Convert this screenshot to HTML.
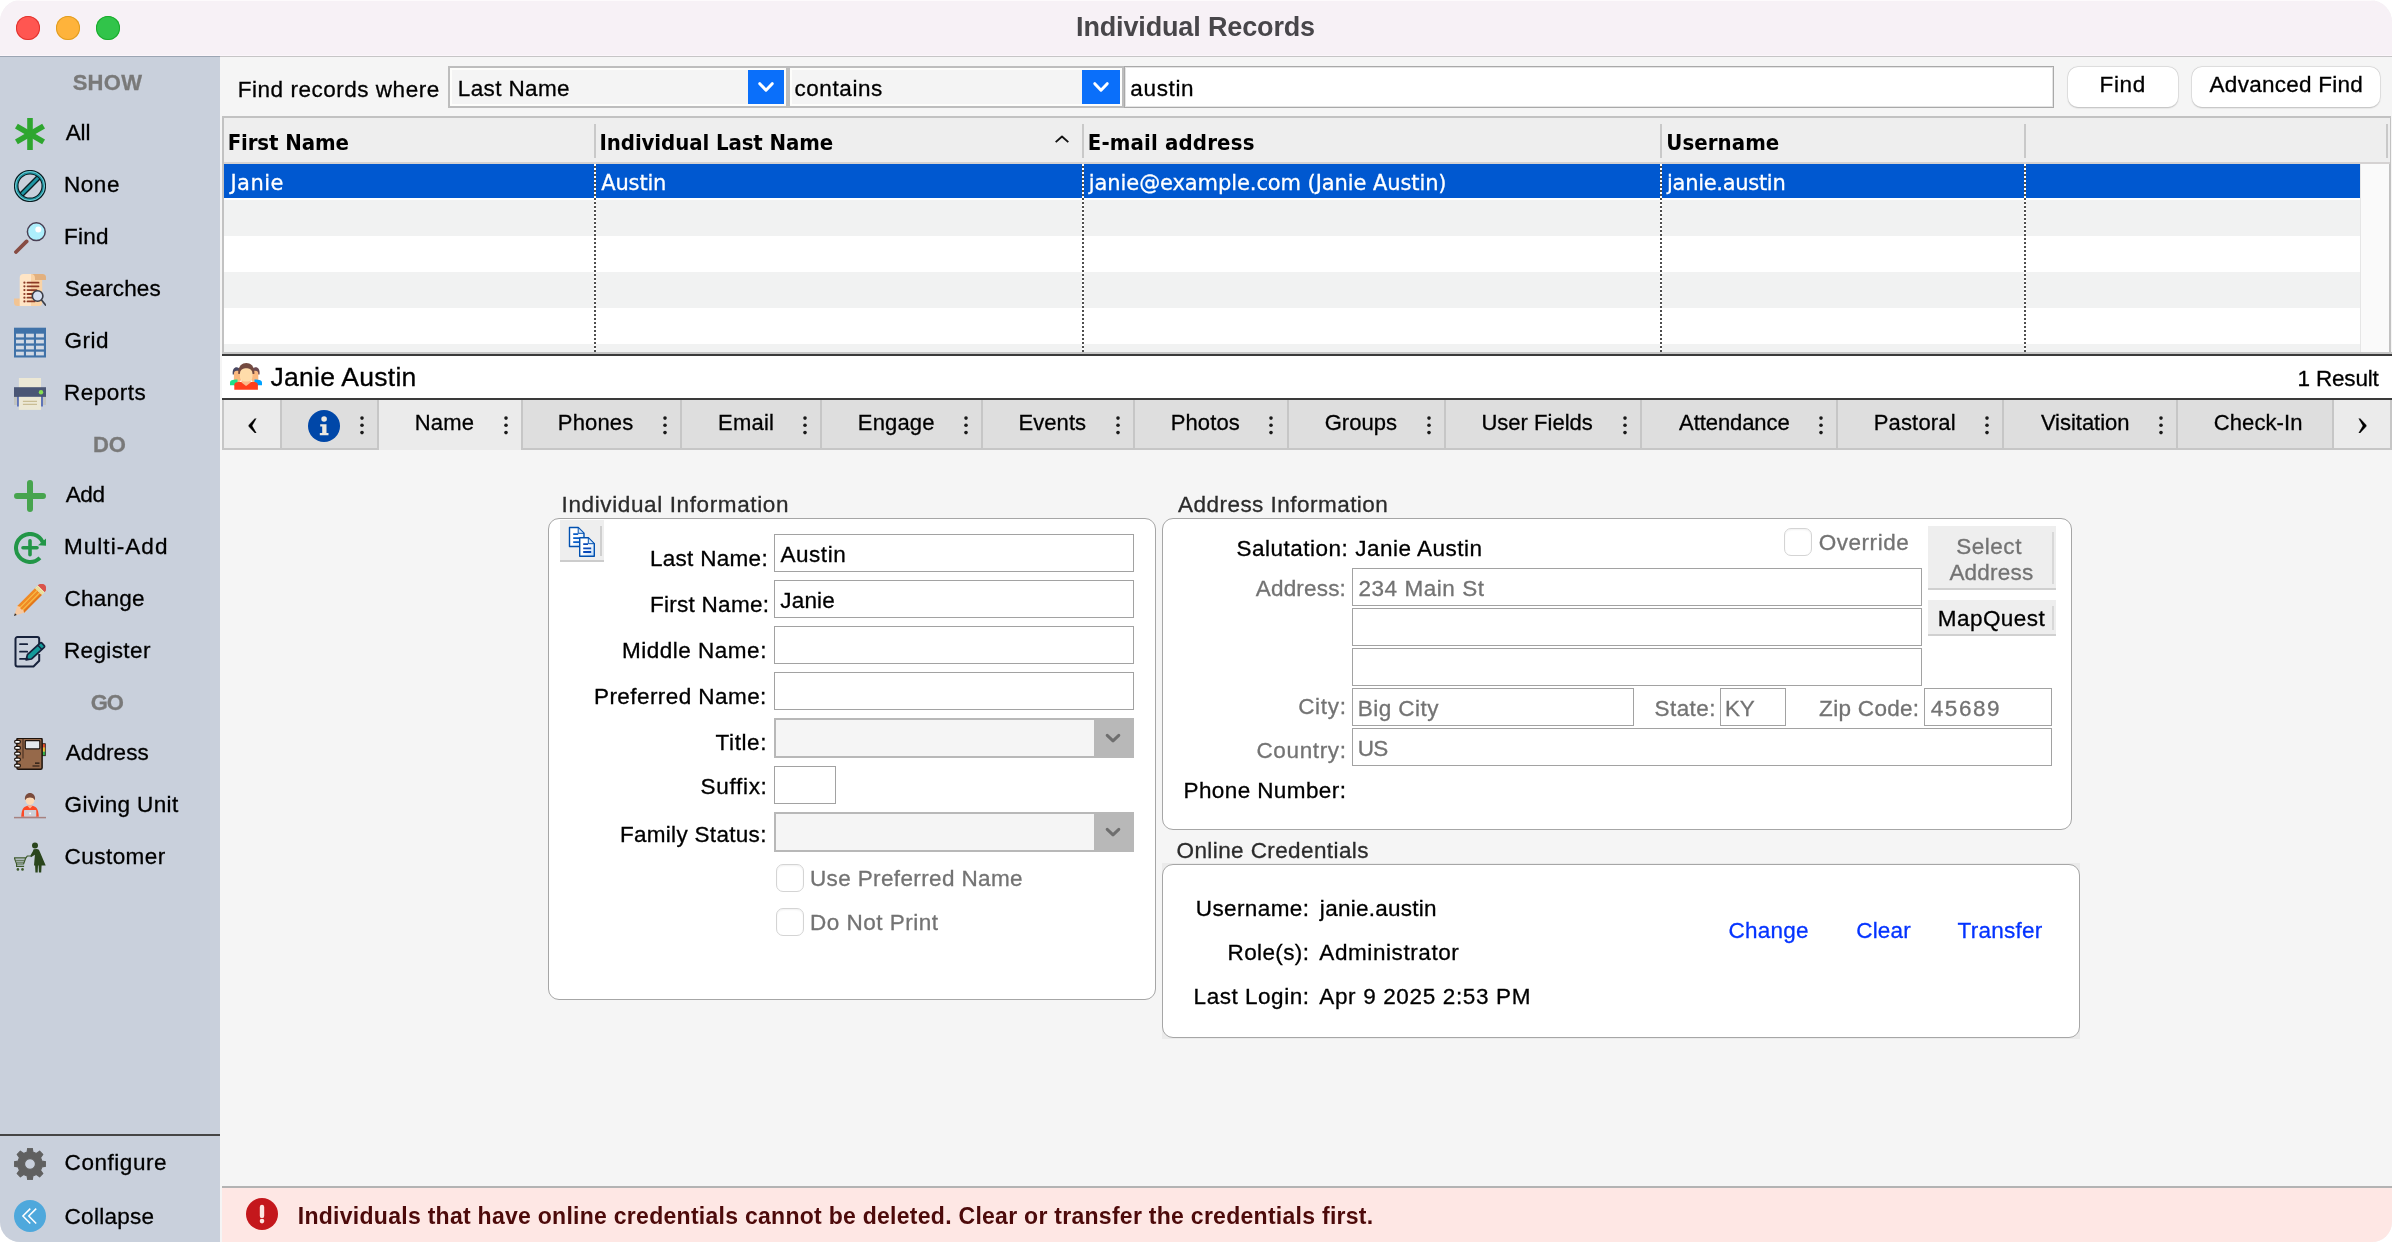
<!DOCTYPE html>
<html lang="en"><head><meta charset="utf-8"><title>Individual Records</title>
<style>
html,body{margin:0;padding:0;background:#fff;}
body{width:2392px;height:1242px;overflow:hidden;position:relative;}
#win{will-change:transform;position:absolute;left:0;top:0;width:2392px;height:1242px;overflow:hidden;border-radius:21px 22px 20px 20px;background:#f5f5f5;}
.t{position:absolute;white-space:pre;line-height:40px;}
.ls,.dv{-webkit-text-stroke:0.3px currentColor;}
.ls{font-family:'Liberation Sans',sans-serif;font-weight:400;}

.lser{font-family:'Liberation Serif',serif;font-weight:400;}
.lsb{font-family:'Liberation Sans',sans-serif;font-weight:700;}
.dv{font-family:'DejaVu Sans',sans-serif;font-weight:400;}
.dvb{font-family:'DejaVu Sans',sans-serif;font-weight:700;}
.dvc{font-family:'DejaVu Sans Condensed','DejaVu Sans',sans-serif;font-weight:400;}
.dvcb{font-family:'DejaVu Sans Condensed','DejaVu Sans',sans-serif;font-weight:700;}
.ic{position:absolute;width:32px;height:32px;}
.ic svg{display:block;}
</style></head>
<body>
<div id="win">
<header id="titlebar">
<div style="position:absolute;left:0px;top:0px;width:2392px;height:56px;background:#f7f1f6;"></div>
<div style="position:absolute;left:0px;top:55px;width:2392px;height:1px;background:#fcf6fb;"></div>
<div style="position:absolute;left:0px;top:0px;width:2392px;height:1px;background:#fdfafc;"></div>
<div style="position:absolute;left:0px;top:56px;width:220px;height:1px;background:#9ca5b3;"></div>
<div style="position:absolute;left:220px;top:56px;width:2172px;height:1px;background:#c6c5c6;"></div>
<div style="position:absolute;left:16px;top:16px;width:24px;height:24px;border-radius:50%;background:#ff5651;box-shadow:inset 0 0 0 1px #e0342f;"></div>
<div style="position:absolute;left:56px;top:16px;width:24px;height:24px;border-radius:50%;background:#feb33b;box-shadow:inset 0 0 0 1px #e09d20;"></div>
<div style="position:absolute;left:96px;top:16px;width:24px;height:24px;border-radius:50%;background:#31c44a;box-shadow:inset 0 0 0 1px #1aab2c;"></div>
<span class="t lsb" style="left:1076.04px;top:7px;font-size:27px;letter-spacing:-0.146px;color:#48464a;">Individual Records</span>
</header>
<nav id="sidebar">
<div style="position:absolute;left:0px;top:57px;width:220px;height:1185px;background:#c9d0dc;"></div>
<div style="position:absolute;left:0px;top:1134px;width:220px;height:2px;background:#454545;"></div>
<span class="t lsb" style="left:72.64px;top:63px;font-size:22px;letter-spacing:0.313px;color:#797979;-webkit-text-stroke:0.3px #797979;">SHOW</span>
<span class="t lsb" style="left:93.07px;top:425px;font-size:22px;letter-spacing:-0.080px;color:#797979;-webkit-text-stroke:0.3px #797979;">DO</span>
<span class="t lsb" style="left:90.82px;top:683px;font-size:22px;letter-spacing:-1.050px;color:#797979;-webkit-text-stroke:0.3px #797979;">GO</span>
<span class="t ls" style="left:65.70px;top:113px;font-size:22.5px;letter-spacing:-0.156px;">All</span>
<div class="ic" style="left:14px;top:118px"><svg width="32" height="32" viewBox="0 0 32 32"><g stroke="#2ea62f" stroke-width="5.600" stroke-linecap="butt"><path d="M16 0V32"/><path d="M2.400 8.100L29.600 23.900"/><path d="M2.400 23.900L29.600 8.100"/></g></svg></div>
<span class="t ls" style="left:63.90px;top:165px;font-size:22.5px;letter-spacing:0.579px;">None</span>
<div class="ic" style="left:14px;top:169.8px"><svg width="32" height="32" viewBox="0 0 32 32"><g fill="none"><path d="M6.800 25.200L25.200 6.800" stroke="#0b1c21" stroke-width="5.600"/><path d="M6.800 25.200L25.200 6.800" stroke="#1e96a4" stroke-width="3"/><circle cx="16" cy="16" r="13.800" stroke="#0b1c21" stroke-width="4.600"/><circle cx="16" cy="16" r="13.800" stroke="#1e96a4" stroke-width="2.400"/><circle cx="16" cy="16" r="14.500" stroke="#9fe3e6" stroke-width="0.700"/></g></svg></div>
<span class="t ls" style="left:63.90px;top:217px;font-size:22.5px;letter-spacing:0.300px;">Find</span>
<div class="ic" style="left:14px;top:222px"><svg width="32" height="32" viewBox="0 0 32 32"><path d="M13.500 18.500L10.800 21.200" stroke="#4a4055" stroke-width="1.800"/><path d="M12.600 19.400L2 30" stroke="#874c43" stroke-width="3.800" stroke-linecap="round"/><circle cx="22.300" cy="9.700" r="8.900" fill="#aeeffc" stroke="#4a4055" stroke-width="1.500"/><circle cx="24.300" cy="7.600" r="3" fill="#fff"/></svg></div>
<span class="t ls" style="left:64.69px;top:269px;font-size:22.5px;letter-spacing:0.148px;">Searches</span>
<div class="ic" style="left:14px;top:273.9px"><svg width="32" height="32" viewBox="0 0 32 32"><path d="M9 0h19.500a3.500 3.500 0 0 1 3.500 3.500v2.500H17z" fill="#e2b07e"/><path d="M0 24.500h6v7.500H3.500a3.500 3.500 0 0 1-3.500-3.500z" fill="#f2c493"/><path d="M9.500 0h7.500v32H5.700V4a4 4 0 0 1 3.800-4z" fill="#ffe5c6"/><path d="M17 0c3 0 4 2 4 4v2h7.200v22.500a3.500 3.500 0 0 1-3.500 3.500H17z" fill="#fad3a6"/><g stroke="#8b3a26" stroke-width="1.800" stroke-linecap="round"><path d="M13.500 8.700h11M13.500 12.300h11M13.500 16.100h9M13.500 20h6M13.500 23.700h5M13.500 27.400h7"/></g><g fill="#8b3a26"><circle cx="10.400" cy="8.700" r="1.100"/><circle cx="10.400" cy="12.300" r="1.100"/><circle cx="10.400" cy="16.100" r="1.100"/><circle cx="10.400" cy="20" r="1.100"/><circle cx="10.400" cy="23.700" r="1.100"/><circle cx="10.400" cy="27.400" r="1.100"/></g><path d="M27.500 26l4 5" stroke="#3a3d48" stroke-width="1.700" stroke-linecap="round"/><circle cx="23.600" cy="22" r="5.300" fill="#d5dff0" stroke="#3a3d48" stroke-width="1.600"/></svg></div>
<span class="t ls" style="left:64.58px;top:321px;font-size:22.5px;letter-spacing:0.487px;">Grid</span>
<div class="ic" style="left:14px;top:326.3px"><svg width="32" height="32" viewBox="0 0 32 32"><rect x="0" y="1.700" width="32" height="29.800" fill="#4072a8"/><g fill="#d2d9e4"><rect x="2" y="7.7" width="7.900" height="3.700"/><rect x="12" y="7.7" width="7.900" height="3.700"/><rect x="22" y="7.7" width="7.900" height="3.700"/><rect x="2" y="13.7" width="7.900" height="3.700"/><rect x="12" y="13.7" width="7.900" height="3.700"/><rect x="22" y="13.7" width="7.900" height="3.700"/><rect x="2" y="19.7" width="7.900" height="3.700"/><rect x="12" y="19.7" width="7.900" height="3.700"/><rect x="22" y="19.7" width="7.900" height="3.700"/><rect x="2" y="25.7" width="7.900" height="3.700"/><rect x="12" y="25.7" width="7.900" height="3.700"/><rect x="22" y="25.7" width="7.900" height="3.700"/></g></svg></div>
<span class="t ls" style="left:63.90px;top:373px;font-size:22.5px;letter-spacing:0.523px;">Reports</span>
<div class="ic" style="left:14px;top:378px"><svg width="32" height="32" viewBox="0 0 32 32"><rect x="4.900" y="0" width="22.100" height="10" fill="#ece8d5"/><rect x="0" y="18" width="3" height="9" fill="#c2c4c0"/><rect x="29" y="18" width="3" height="9" fill="#c2c4c0"/><rect x="3" y="18" width="2" height="10.500" fill="#5f74b8"/><rect x="27" y="18" width="2" height="10.500" fill="#5f74b8"/><rect x="0" y="9.200" width="32" height="9.700" fill="#4a5675"/><rect x="4.900" y="18.900" width="22.100" height="13" fill="#ece8d5"/><path d="M8.900 23.400h14.100M8.900 26.400h14.100" stroke="#c9bd94" stroke-width="1.100"/><circle cx="27" cy="14.300" r="2.200" fill="#86e052"/></svg></div>
<span class="t ls" style="left:65.70px;top:475px;font-size:22.5px;letter-spacing:-0.344px;">Add</span>
<div class="ic" style="left:14px;top:479.9px"><svg width="32" height="32" viewBox="0 0 32 32"><path d="M16 3V29M3 16H29" stroke="#47a44e" stroke-width="6" stroke-linecap="round"/></svg></div>
<span class="t ls" style="left:63.90px;top:527px;font-size:22.5px;letter-spacing:1.062px;">Multi-Add</span>
<div class="ic" style="left:14px;top:532px"><svg width="32" height="32" viewBox="0 0 32 32"><path d="M25.900 25.900A14 14 0 1 1 28.800 10.300" fill="none" stroke="#229647" stroke-width="4"/><path d="M32 6.400V13.800L24 13.300Z" fill="#229647"/><path d="M16 8.800V22.800M9 15.800H23" stroke="#229647" stroke-width="3.600" stroke-linecap="round"/></svg></div>
<span class="t ls" style="left:64.58px;top:579px;font-size:22.5px;letter-spacing:0.237px;">Change</span>
<div class="ic" style="left:14px;top:584px"><svg width="32" height="32" viewBox="0 0 32 32"><g transform="rotate(45 16 16)"><path d="M11.200 -0.300a4.800 4.800 0 0 1 9.600 0v0.600h-9.600z" fill="#d9534a"/><rect x="11.200" y="0.200" width="9.600" height="4" fill="#f3eeb8"/><path d="M11.200 1.600h9.600M11.200 3h9.600" stroke="#d8c77a" stroke-width="0.700"/><rect x="11.200" y="4.200" width="9.600" height="25" fill="#f08a24"/><rect x="13.800" y="4.200" width="1" height="25" fill="#f7c24e"/><rect x="17.200" y="4.200" width="1" height="25" fill="#f7c24e"/><rect x="19.200" y="4.200" width="1.600" height="25" fill="#e0761a"/><path d="M11.200 29.200l2.400-1.400 2.400 1.400 2.400-1.400 2.400 1.400-4.800 9.200z" fill="#f7c9a0"/><path d="M14.700 36l1.300 2.700 1.300-2.700z" fill="#2b2b2b"/></g></svg></div>
<span class="t ls" style="left:63.90px;top:631px;font-size:22.5px;letter-spacing:0.391px;">Register</span>
<div class="ic" style="left:14px;top:636.2px"><svg width="32" height="32" viewBox="0 0 32 32"><path d="M25.200 9V3a2 2 0 0 0-2-2H3.500a2 2 0 0 0-2 2v25.500a2 2 0 0 0 2 2h16l5.700-5.700V18" fill="none" stroke="#16213b" stroke-width="2" stroke-linejoin="round"/><path d="M6 8.200h7.200M6 15.700h7.200M6 22.900h6" stroke="#16213b" stroke-width="1.800" stroke-linecap="round"/><g transform="rotate(-42.500 21.800 15)"><path d="M8.600 15l4.500-2.900h17.400a1.200 1.200 0 0 1 1.200 1.200v3.400a1.200 1.200 0 0 1-1.200 1.200H13.100z" fill="#149a9a" stroke="#16213b" stroke-width="1.700" stroke-linejoin="round"/><path d="M27.300 12.100v5.800" stroke="#16213b" stroke-width="1.500"/><path d="M8.600 15l2.600-1.700v3.400z" fill="#16213b"/></g></svg></div>
<span class="t ls" style="left:65.70px;top:733px;font-size:22.5px;letter-spacing:0.085px;">Address</span>
<div class="ic" style="left:14px;top:738.2px"><svg width="32" height="32" viewBox="0 0 32 32"><rect x="28" y="5.700" width="3.300" height="4" fill="#e8502a"/><rect x="28" y="9.700" width="3.300" height="4" fill="#f2c230"/><rect x="28" y="13.700" width="3.300" height="4" fill="#35b34a"/><rect x="28" y="5.700" width="3.300" height="12" fill="none" stroke="#1d130d" stroke-width="0.800"/><rect x="2.900" y="0.200" width="25.200" height="31" rx="1.500" fill="#96694a" stroke="#1d130d" stroke-width="1.500"/><path d="M9 1v19.500" stroke="#4e3323" stroke-width="1.200"/><rect x="11.300" y="2.600" width="14.500" height="8.300" rx="0.800" fill="#e4e8ec" stroke="#1d130d" stroke-width="1.200"/><path d="M21 25.100h4.500M18.500 28h7" stroke="#1d130d" stroke-width="1.100"/><g fill="#fff" stroke="#1d130d" stroke-width="1.200"><rect x="0.600" y="2.3" width="5.800" height="3" rx="1.500"/><rect x="0.600" y="8.4" width="5.800" height="3" rx="1.500"/><rect x="0.600" y="14.2" width="5.800" height="3" rx="1.500"/><rect x="0.600" y="20.1" width="5.800" height="3" rx="1.500"/><rect x="0.600" y="26.2" width="5.800" height="3" rx="1.500"/></g></svg></div>
<span class="t ls" style="left:64.58px;top:785px;font-size:22.5px;letter-spacing:0.351px;">Giving Unit</span>
<div class="ic" style="left:14px;top:790.3px"><svg width="32" height="32" viewBox="0 0 32 32"><ellipse cx="16" cy="10" rx="4.400" ry="4.900" fill="#fdd9b5"/><path d="M11 9.800C9.800 0.800 22.200 0.800 21 9.800L20.300 9.800C19.600 6.600 12.400 6.600 11.700 9.800Z" fill="#7a4b3c"/><path d="M7.200 26.800c0.500-8.500 2.500-11 8.800-11s8.300 2.500 8.800 11z" fill="#fc4a26"/><path d="M13.300 15.700l2.700 2.700 2.700-2.700a8 8 0 0 0-5.400 0z" fill="#fdb493"/><rect x="10" y="20" width="12.300" height="6.800" rx="0.700" fill="#cdd0d8"/><rect x="15.300" y="22.600" width="1.700" height="1.700" fill="#fff"/><path d="M0 27.600h32" stroke="#a68280" stroke-width="1.500"/></svg></div>
<span class="t ls" style="left:64.58px;top:837px;font-size:22.5px;letter-spacing:0.448px;">Customer</span>
<div class="ic" style="left:14px;top:842.3px"><svg width="32" height="32" viewBox="0 0 32 32"><g fill="#2a451c"><circle cx="21" cy="3.400" r="3"/><path d="M19.800 7.200L22.900 7C24.200 7 25.100 7.800 25.600 9.200L31.700 23.500L27.600 23.500L27.200 30.600L24.900 30.600L24.600 23.500L24 23.500L23.700 30.600L21.400 30.600L21.100 23.500L20 23.500L20.900 12.800L17 15.300L16.100 14L19 9C19.200 8 19.400 7.400 19.800 7.200Z"/></g><g fill="none" stroke="#3e5a2c" stroke-width="1.200"><path d="M0.300 15.800h11.500l-2.200 6.200h-7z"/><path d="M2.100 18.300h8.600M2.700 20.200h7.400" stroke-width="0.900"/><path d="M11.800 15.800l1.500-1.800h3.200"/><path d="M2.600 22v2.300h7.500"/></g><circle cx="3.900" cy="27.400" r="1.300" fill="#3e5a2c"/><circle cx="8.500" cy="27.400" r="1.300" fill="#3e5a2c"/></svg></div>
<span class="t ls" style="left:64.58px;top:1143px;font-size:22.5px;letter-spacing:0.550px;">Configure</span>
<div class="ic" style="left:14px;top:1148px"><svg width="32" height="32" viewBox="0 0 32 32"><path d="M13.14 4.04L13.77 0.16L18.23 0.16L18.86 4.04L22.43 5.52L25.62 3.22L28.78 6.38L26.48 9.57L27.96 13.14L31.84 13.77L31.84 18.23L27.96 18.86L26.48 22.43L28.78 25.62L25.62 28.78L22.43 26.48L18.86 27.96L18.23 31.84L13.77 31.84L13.14 27.96L9.57 26.48L6.38 28.78L3.22 25.62L5.52 22.43L4.04 18.86L0.16 18.23L0.16 13.77L4.04 13.14L5.52 9.57L3.22 6.38L6.38 3.22L9.57 5.52Z M16 10.600a5.400 5.400 0 1 0 0.010 0z" fill="#606060" fill-rule="evenodd" stroke="#606060" stroke-width="1.200" stroke-linejoin="round"/></svg></div>
<span class="t ls" style="left:64.58px;top:1197px;font-size:22.5px;letter-spacing:0.273px;">Collapse</span>
<div class="ic" style="left:14px;top:1199.8px"><svg width="32" height="32" viewBox="0 0 32 32"><circle cx="16" cy="16" r="16" fill="#4ea8dc"/><path d="M16.300 8.600L8.900 16L16.300 23.600M22.200 8.600L14.800 16L22.200 23.600" fill="none" stroke="#fff" stroke-width="1.500"/></svg></div>
</nav>
<section id="find-toolbar">
<span class="t ls" style="left:237.80px;top:70px;font-size:22.5px;letter-spacing:0.518px;">Find records where</span>
<div style="position:absolute;left:448px;top:66px;width:340px;height:42px;box-sizing:border-box;border:2px solid #bdbdbd;background:#f4f4f4;box-shadow:inset 0 0 0 2px #fdfdfb;"></div>
<div style="position:absolute;left:748px;top:70px;width:36px;height:34px;background:#0a6ffa;"><svg width="36" height="34" viewBox="0 0 36 34"><path d="M11.8 13.700 L18.0 20.200 L24.2 13.700" fill="none" stroke="#fff" stroke-width="3" stroke-linecap="round" stroke-linejoin="round"/></svg></div>
<span class="t ls" style="left:457.80px;top:69px;font-size:22.5px;letter-spacing:0.378px;">Last Name</span>
<div style="position:absolute;left:788px;top:66px;width:336px;height:42px;box-sizing:border-box;border:2px solid #bdbdbd;background:#f4f4f4;box-shadow:inset 0 0 0 2px #fdfdfb;"></div>
<div style="position:absolute;left:1082px;top:70px;width:38px;height:34px;background:#0a6ffa;"><svg width="38" height="34" viewBox="0 0 38 34"><path d="M12.8 13.700 L19.0 20.200 L25.2 13.700" fill="none" stroke="#fff" stroke-width="3" stroke-linecap="round" stroke-linejoin="round"/></svg></div>
<span class="t ls" style="left:794.40px;top:69px;font-size:22.5px;letter-spacing:0.596px;">contains</span>
<div style="position:absolute;left:1124px;top:66px;width:930px;height:42px;box-sizing:border-box;border:1px solid #a9a9a9;background:#fff;box-shadow:inset 0 0 0 1px #e4e4e4;"></div>
<span class="t ls" style="left:1130.30px;top:69px;font-size:22.5px;letter-spacing:0.660px;">austin</span>
<div style="position:absolute;left:2068px;top:67px;width:110px;height:40px;border-radius:10px;background:#fff;box-shadow:0 0 0 0.5px #d2d2d2,0 0.5px 1.5px rgba(0,0,0,.28);"></div>
<span class="t ls" style="left:2099.60px;top:65px;font-size:22.5px;letter-spacing:0.600px;">Find</span>
<div style="position:absolute;left:2192px;top:67px;width:188px;height:40px;border-radius:10px;background:#fff;box-shadow:0 0 0 0.5px #d2d2d2,0 0.5px 1.5px rgba(0,0,0,.28);"></div>
<span class="t ls" style="left:2209.60px;top:65px;font-size:22.5px;letter-spacing:0.257px;">Advanced Find</span>
</section>
<section id="results-table">
<div style="position:absolute;left:222px;top:116px;width:2169px;height:238px;box-sizing:border-box;border:2px solid #c2c2c2;border-bottom:none;background:#fff;"></div>
<div style="position:absolute;left:224px;top:118px;width:2166px;height:44px;background:#eeeeee;"></div>
<div style="position:absolute;left:224px;top:162px;width:2166px;height:2px;background:#d5d2d2;"></div>
<div style="position:absolute;left:224px;top:164px;width:2136px;height:34px;background:#0058d0;"></div>
<div style="position:absolute;left:224px;top:200px;width:2136px;height:36px;background:#f1f2f2;"></div>
<div style="position:absolute;left:224px;top:272px;width:2136px;height:36px;background:#f1f2f2;"></div>
<div style="position:absolute;left:224px;top:344px;width:2136px;height:8px;background:#f1f2f2;"></div>
<div style="position:absolute;left:2360px;top:164px;width:28px;height:188px;background:#fafafa;border-left:1px solid #e6e6e6;"></div>
<div style="position:absolute;left:222px;top:352px;width:2170px;height:2px;background:#c6c6c6;"></div>
<div style="position:absolute;left:222px;top:354px;width:2170px;height:2px;background:#3a3a3a;"></div>
<div style="position:absolute;left:594px;top:124px;width:2px;height:34px;background:#c9c9c9;"></div>
<div style="position:absolute;left:594px;top:164px;width:2px;height:188px;background:repeating-linear-gradient(to bottom,#fff 0,#fff 2px,#4e4e4e 2px,#4e4e4e 4px);"></div>
<div style="position:absolute;left:1082px;top:124px;width:2px;height:34px;background:#c9c9c9;"></div>
<div style="position:absolute;left:1082px;top:164px;width:2px;height:188px;background:repeating-linear-gradient(to bottom,#fff 0,#fff 2px,#4e4e4e 2px,#4e4e4e 4px);"></div>
<div style="position:absolute;left:1660px;top:124px;width:2px;height:34px;background:#c9c9c9;"></div>
<div style="position:absolute;left:1660px;top:164px;width:2px;height:188px;background:repeating-linear-gradient(to bottom,#fff 0,#fff 2px,#4e4e4e 2px,#4e4e4e 4px);"></div>
<div style="position:absolute;left:2024px;top:124px;width:2px;height:34px;background:#c9c9c9;"></div>
<div style="position:absolute;left:2024px;top:164px;width:2px;height:188px;background:repeating-linear-gradient(to bottom,#fff 0,#fff 2px,#4e4e4e 2px,#4e4e4e 4px);"></div>
<div style="position:absolute;left:2386px;top:124px;width:2px;height:34px;background:#c9c9c9;"></div>
<svg style="position:absolute;left:1053px;top:133px" width="18" height="12" viewBox="0 0 18 12"><path d="M2.700 9.100 L9 3.500 L15.300 9.100" fill="none" stroke="#111" stroke-width="1.900" stroke-linejoin="round"/></svg>
<span class="t dvcb" style="left:227.64px;top:123px;font-size:22px;letter-spacing:-0.107px;">First Name</span>
<span class="t dvcb" style="left:599.54px;top:123px;font-size:22px;letter-spacing:-0.092px;">Individual Last Name</span>
<span class="t dvcb" style="left:1087.74px;top:123px;font-size:22px;letter-spacing:0.160px;">E-mail address</span>
<span class="t dvcb" style="left:1666.34px;top:123px;font-size:22px;letter-spacing:0.060px;">Username</span>
<span class="t dv" style="left:230.45px;top:163px;font-size:21px;letter-spacing:0.441px;color:#fff;">Janie</span>
<span class="t dv" style="left:601.29px;top:163px;font-size:21px;letter-spacing:-0.170px;color:#fff;">Austin</span>
<span class="t dv" style="left:1088.82px;top:163px;font-size:21px;letter-spacing:-0.090px;color:#fff;">janie@example.com (Janie Austin)</span>
<span class="t dv" style="left:1667.02px;top:163px;font-size:21px;letter-spacing:-0.295px;color:#fff;">janie.austin</span>
</section>
<section id="record-title">
<div style="position:absolute;left:222px;top:356px;width:2170px;height:42px;background:#fff;"></div>
<div style="position:absolute;left:222px;top:398px;width:2170px;height:2px;background:#3a3a3a;"></div>
<div class="ic" style="left:230px;top:362.500px"><svg width="32" height="27" viewBox="0 0 32 27"><path d="M2.700 11.500c-1-9 6-8.500 7.500-5v5z" fill="#4a4862"/><path d="M29.500 11.500c1-9-6-8.500-7.500-5v5z" fill="#6a4a52"/><rect x="3.900" y="7.800" width="7" height="11.500" rx="3" fill="#fbb97f"/><rect x="21.300" y="7.800" width="7" height="11.500" rx="3" fill="#fbb97f"/><path d="M0 22.300v-2.500c0-2.300 2-3.300 7.500-3.300v5.800z" fill="#1fe08a"/><path d="M32 22.300v-2.500c0-2.300-2-3.300-7.500-3.300v5.800z" fill="#00a2ff"/><path d="M4.300 26.800v-4.500c0-2.200 1.500-3.200 4-3.200h15.600c2.500 0 4 1 4 3.200v4.500z" fill="#ff3d1c"/><path d="M11.500 17h9.200v2.400l-4.600 3.600-4.600-3.600z" fill="#fbb98a"/><path d="M8.300 11c-1.500-14.600 17.500-14.600 16 0z" fill="#744a40"/><rect x="9.900" y="5.300" width="12.600" height="13.300" rx="5.200" fill="#ffdcaa"/></svg></div>
<span class="t ls" style="left:270.60px;top:357px;font-size:26.5px;letter-spacing:0.253px;">Janie Austin</span>
<span class="t ls" style="left:2297.51px;top:359px;font-size:22.5px;letter-spacing:-0.180px;">1 Result</span>
</section>
<section id="tab-bar">
<div style="position:absolute;left:222px;top:400px;width:2170px;height:50px;background:#dedede;box-shadow:inset 0 -2px 0 #c6c6c6;"></div>
<div style="position:absolute;left:222px;top:400px;width:58px;height:48px;background:#ebebeb;"></div>
<div style="position:absolute;left:2334px;top:400px;width:56px;height:48px;background:#ebebeb;"></div>
<div style="position:absolute;left:379px;top:400px;width:142px;height:50px;background:#ebebeb;"></div>
<div style="position:absolute;left:222px;top:400px;width:2px;height:50px;background:#c6c6c6;"></div>
<div style="position:absolute;left:280px;top:400px;width:2px;height:48px;background:#c6c6c6;"></div>
<div style="position:absolute;left:377px;top:400px;width:2px;height:50px;background:#c6c6c6;"></div>
<div style="position:absolute;left:521px;top:400px;width:2px;height:48px;background:#c6c6c6;"></div>
<div style="position:absolute;left:680px;top:400px;width:2px;height:48px;background:#c6c6c6;"></div>
<div style="position:absolute;left:820px;top:400px;width:2px;height:48px;background:#c6c6c6;"></div>
<div style="position:absolute;left:981px;top:400px;width:2px;height:48px;background:#c6c6c6;"></div>
<div style="position:absolute;left:1133px;top:400px;width:2px;height:48px;background:#c6c6c6;"></div>
<div style="position:absolute;left:1287px;top:400px;width:2px;height:48px;background:#c6c6c6;"></div>
<div style="position:absolute;left:1444px;top:400px;width:2px;height:48px;background:#c6c6c6;"></div>
<div style="position:absolute;left:1640px;top:400px;width:2px;height:48px;background:#c6c6c6;"></div>
<div style="position:absolute;left:1836px;top:400px;width:2px;height:48px;background:#c6c6c6;"></div>
<div style="position:absolute;left:2002px;top:400px;width:2px;height:48px;background:#c6c6c6;"></div>
<div style="position:absolute;left:2176px;top:400px;width:2px;height:48px;background:#c6c6c6;"></div>
<div style="position:absolute;left:2332px;top:400px;width:2px;height:48px;background:#c6c6c6;"></div>
<div style="position:absolute;left:2390px;top:400px;width:2px;height:48px;background:#c6c6c6;"></div>
<span class="t lser" style="left:246.16px;top:402px;font-size:37.5px;-webkit-text-stroke:0.2px #000;">‹</span>
<span class="t lser" style="left:2356.36px;top:402px;font-size:37.5px;-webkit-text-stroke:0.2px #000;">›</span>
<div class="ic" style="left:308px;top:410px"><svg width="32" height="32" viewBox="0 0 32 32"><circle cx="16" cy="16" r="16" fill="#0047a8"/><circle cx="16.100" cy="9" r="2.800" fill="#ece8e0"/><path d="M12.200 14.200h6.300v8.700h2v2.400h-8.700v-2.400h2.400v-6.300h-2z" fill="#ece8e0"/></svg></div>
<svg style="position:absolute;left:358.8px;top:414px" width="6" height="24" viewBox="0 0 6 24"><circle cx="3" cy="4.100" r="1.800" fill="#1a1a1a"/><circle cx="3" cy="11.300" r="1.800" fill="#1a1a1a"/><circle cx="3" cy="18.600" r="1.800" fill="#1a1a1a"/></svg>
<span class="t ls" style="left:414.74px;top:403px;font-size:22px;letter-spacing:0.207px;">Name</span>
<svg style="position:absolute;left:502.6px;top:414px" width="6" height="24" viewBox="0 0 6 24"><circle cx="3" cy="4.100" r="1.800" fill="#1a1a1a"/><circle cx="3" cy="11.300" r="1.800" fill="#1a1a1a"/><circle cx="3" cy="18.600" r="1.800" fill="#1a1a1a"/></svg>
<span class="t ls" style="left:557.84px;top:403px;font-size:22px;letter-spacing:0.150px;">Phones</span>
<svg style="position:absolute;left:661.8px;top:414px" width="6" height="24" viewBox="0 0 6 24"><circle cx="3" cy="4.100" r="1.800" fill="#1a1a1a"/><circle cx="3" cy="11.300" r="1.800" fill="#1a1a1a"/><circle cx="3" cy="18.600" r="1.800" fill="#1a1a1a"/></svg>
<span class="t ls" style="left:718.04px;top:403px;font-size:22px;letter-spacing:0.223px;">Email</span>
<svg style="position:absolute;left:801.6px;top:414px" width="6" height="24" viewBox="0 0 6 24"><circle cx="3" cy="4.100" r="1.800" fill="#1a1a1a"/><circle cx="3" cy="11.300" r="1.800" fill="#1a1a1a"/><circle cx="3" cy="18.600" r="1.800" fill="#1a1a1a"/></svg>
<span class="t ls" style="left:857.84px;top:403px;font-size:22px;letter-spacing:0.152px;">Engage</span>
<svg style="position:absolute;left:962.8px;top:414px" width="6" height="24" viewBox="0 0 6 24"><circle cx="3" cy="4.100" r="1.800" fill="#1a1a1a"/><circle cx="3" cy="11.300" r="1.800" fill="#1a1a1a"/><circle cx="3" cy="18.600" r="1.800" fill="#1a1a1a"/></svg>
<span class="t ls" style="left:1018.44px;top:403px;font-size:22px;letter-spacing:0.084px;">Events</span>
<svg style="position:absolute;left:1114.7px;top:414px" width="6" height="24" viewBox="0 0 6 24"><circle cx="3" cy="4.100" r="1.800" fill="#1a1a1a"/><circle cx="3" cy="11.300" r="1.800" fill="#1a1a1a"/><circle cx="3" cy="18.600" r="1.800" fill="#1a1a1a"/></svg>
<span class="t ls" style="left:1170.64px;top:403px;font-size:22px;letter-spacing:0.140px;">Photos</span>
<svg style="position:absolute;left:1267.9px;top:414px" width="6" height="24" viewBox="0 0 6 24"><circle cx="3" cy="4.100" r="1.800" fill="#1a1a1a"/><circle cx="3" cy="11.300" r="1.800" fill="#1a1a1a"/><circle cx="3" cy="18.600" r="1.800" fill="#1a1a1a"/></svg>
<span class="t ls" style="left:1324.70px;top:403px;font-size:22px;letter-spacing:0.042px;">Groups</span>
<svg style="position:absolute;left:1425.8px;top:414px" width="6" height="24" viewBox="0 0 6 24"><circle cx="3" cy="4.100" r="1.800" fill="#1a1a1a"/><circle cx="3" cy="11.300" r="1.800" fill="#1a1a1a"/><circle cx="3" cy="18.600" r="1.800" fill="#1a1a1a"/></svg>
<span class="t ls" style="left:1481.45px;top:403px;font-size:22px;letter-spacing:0.011px;">User Fields</span>
<svg style="position:absolute;left:1621.7px;top:414px" width="6" height="24" viewBox="0 0 6 24"><circle cx="3" cy="4.100" r="1.800" fill="#1a1a1a"/><circle cx="3" cy="11.300" r="1.800" fill="#1a1a1a"/><circle cx="3" cy="18.600" r="1.800" fill="#1a1a1a"/></svg>
<span class="t ls" style="left:1679.10px;top:403px;font-size:22px;letter-spacing:-0.081px;">Attendance</span>
<svg style="position:absolute;left:1818.1px;top:414px" width="6" height="24" viewBox="0 0 6 24"><circle cx="3" cy="4.100" r="1.800" fill="#1a1a1a"/><circle cx="3" cy="11.300" r="1.800" fill="#1a1a1a"/><circle cx="3" cy="18.600" r="1.800" fill="#1a1a1a"/></svg>
<span class="t ls" style="left:1873.64px;top:403px;font-size:22px;letter-spacing:0.194px;">Pastoral</span>
<svg style="position:absolute;left:1983.6px;top:414px" width="6" height="24" viewBox="0 0 6 24"><circle cx="3" cy="4.100" r="1.800" fill="#1a1a1a"/><circle cx="3" cy="11.300" r="1.800" fill="#1a1a1a"/><circle cx="3" cy="18.600" r="1.800" fill="#1a1a1a"/></svg>
<span class="t ls" style="left:2040.89px;top:403px;font-size:22px;letter-spacing:-0.027px;">Visitation</span>
<svg style="position:absolute;left:2157.6px;top:414px" width="6" height="24" viewBox="0 0 6 24"><circle cx="3" cy="4.100" r="1.800" fill="#1a1a1a"/><circle cx="3" cy="11.300" r="1.800" fill="#1a1a1a"/><circle cx="3" cy="18.600" r="1.800" fill="#1a1a1a"/></svg>
<span class="t ls" style="left:2213.80px;top:403px;font-size:22px;letter-spacing:0.090px;">Check-In</span>
</section>
<section id="individual-information">
<span class="t ls" style="left:561.57px;top:485px;font-size:22.5px;letter-spacing:0.620px;color:#2b2b2b;">Individual Information</span>
<div style="position:absolute;left:548px;top:518px;width:608px;height:482px;box-sizing:border-box;border:1px solid #a6a6a6;border-radius:11px;background:#fff;"></div>
<div style="position:absolute;left:560px;top:520px;width:44px;height:40px;background:#eeeeee;box-shadow:0 2px 0 #cccccc;"></div>
<div style="position:absolute;left:600px;top:526px;width:2px;height:30px;background:#cfcfcf;"></div>
<div class="ic" style="left:568px;top:526px"><svg width="28" height="31" viewBox="0 0 28 31"><defs><linearGradient id="cg" x1="0" y1="0" x2="1" y2="1"><stop offset="0.500" stop-color="#fff"/><stop offset="1" stop-color="#b9d8f7"/></linearGradient></defs><path d="M1.500 1.500h8.700l5.800 5.800v13.200H1.500z" fill="url(#cg)" stroke="#0050b0" stroke-width="1.400" stroke-linejoin="round"/><path d="M10.200 1.500v5.800h5.800z" fill="#d9e9fb" stroke="#0050b0" stroke-width="1" stroke-linejoin="round"/><path d="M5.200 8.200h5M5.200 12.200h6M5.200 16.100h6" stroke="#0a5ec8" stroke-width="1.700"/><path d="M11.700 11.700h8.600l6 6v12.500H11.700z" fill="url(#cg)" stroke="#0050b0" stroke-width="1.400" stroke-linejoin="round"/><path d="M20.300 11.700v6h6z" fill="#d9e9fb" stroke="#0050b0" stroke-width="1" stroke-linejoin="round"/><path d="M15.200 18.200h4.800M15.200 22.300h8M15.200 26h8" stroke="#0a4ab8" stroke-width="1.800"/></svg></div>
<div style="position:absolute;left:774px;top:534px;width:360px;height:38px;box-sizing:border-box;border:1px solid #a2a2a2;background:#fff;"></div>
<div style="position:absolute;left:774px;top:580px;width:360px;height:38px;box-sizing:border-box;border:1px solid #a2a2a2;background:#fff;"></div>
<div style="position:absolute;left:774px;top:626px;width:360px;height:38px;box-sizing:border-box;border:1px solid #a2a2a2;background:#fff;"></div>
<div style="position:absolute;left:774px;top:672px;width:360px;height:38px;box-sizing:border-box;border:1px solid #a2a2a2;background:#fff;"></div>
<div style="position:absolute;left:774px;top:766px;width:62px;height:38px;box-sizing:border-box;border:1px solid #a2a2a2;background:#fff;"></div>
<div style="position:absolute;left:774px;top:718px;width:360px;height:40px;box-sizing:border-box;border:2px solid #b8b8b8;background:#f5f5f5;"></div>
<div style="position:absolute;left:1094px;top:718px;width:40px;height:40px;background:#b8b8b8;"><svg width="40" height="40" viewBox="0 0 40 40"><path d="M13.200 17.400 L19 22.900 L24.800 17.400" fill="none" stroke="#6e6e6e" stroke-width="3" stroke-linecap="round" stroke-linejoin="round"/></svg></div>
<div style="position:absolute;left:774px;top:812px;width:360px;height:40px;box-sizing:border-box;border:2px solid #b8b8b8;background:#f5f5f5;"></div>
<div style="position:absolute;left:1094px;top:812px;width:40px;height:40px;background:#b8b8b8;"><svg width="40" height="40" viewBox="0 0 40 40"><path d="M13.200 17.400 L19 22.900 L24.800 17.400" fill="none" stroke="#6e6e6e" stroke-width="3" stroke-linecap="round" stroke-linejoin="round"/></svg></div>
<span class="t ls" style="left:649.90px;top:539px;font-size:22.5px;letter-spacing:0.306px;">Last Name:</span>
<span class="t ls" style="left:649.90px;top:585px;font-size:22.5px;letter-spacing:0.281px;">First Name:</span>
<span class="t ls" style="left:621.90px;top:631px;font-size:22.5px;letter-spacing:0.519px;">Middle Name:</span>
<span class="t ls" style="left:594.00px;top:677px;font-size:22.5px;letter-spacing:0.432px;">Preferred Name:</span>
<span class="t ls" style="left:715.55px;top:723px;font-size:22.5px;letter-spacing:0.592px;">Title:</span>
<span class="t ls" style="left:700.49px;top:767px;font-size:22.5px;letter-spacing:0.706px;">Suffix:</span>
<span class="t ls" style="left:619.90px;top:815px;font-size:22.5px;letter-spacing:0.308px;">Family Status:</span>
<span class="t ls" style="left:780.60px;top:535px;font-size:22.5px;letter-spacing:0.503px;">Austin</span>
<span class="t ls" style="left:780.26px;top:581px;font-size:22.5px;letter-spacing:0.194px;">Janie</span>
<div style="position:absolute;left:776px;top:864px;width:28px;height:28px;box-sizing:border-box;border:1px solid #d4d4d4;border-radius:7px;background:#fff;box-shadow:inset 0 1px 2px rgba(0,0,0,.06);"></div>
<div style="position:absolute;left:776px;top:908px;width:28px;height:28px;box-sizing:border-box;border:1px solid #d4d4d4;border-radius:7px;background:#fff;box-shadow:inset 0 1px 2px rgba(0,0,0,.06);"></div>
<span class="t ls" style="left:810.01px;top:859px;font-size:22.5px;letter-spacing:0.369px;color:#737373;">Use Preferred Name</span>
<span class="t ls" style="left:809.90px;top:903px;font-size:22.5px;letter-spacing:0.509px;color:#737373;">Do Not Print</span>
</section>
<section id="address-information">
<span class="t ls" style="left:1178.00px;top:485px;font-size:22.5px;letter-spacing:0.472px;color:#2b2b2b;">Address Information</span>
<div style="position:absolute;left:1162px;top:518px;width:910px;height:312px;box-sizing:border-box;border:1px solid #a6a6a6;border-radius:11px;background:#fff;"></div>
<div style="position:absolute;left:1352px;top:568px;width:570px;height:38px;box-sizing:border-box;border:1px solid #a2a2a2;background:#fff;"></div>
<div style="position:absolute;left:1352px;top:608px;width:570px;height:38px;box-sizing:border-box;border:1px solid #a2a2a2;background:#fff;"></div>
<div style="position:absolute;left:1352px;top:648px;width:570px;height:38px;box-sizing:border-box;border:1px solid #a2a2a2;background:#fff;"></div>
<div style="position:absolute;left:1352px;top:688px;width:282px;height:38px;box-sizing:border-box;border:1px solid #a2a2a2;background:#fff;"></div>
<div style="position:absolute;left:1720px;top:688px;width:66px;height:38px;box-sizing:border-box;border:1px solid #a2a2a2;background:#fff;"></div>
<div style="position:absolute;left:1924px;top:688px;width:128px;height:38px;box-sizing:border-box;border:1px solid #a2a2a2;background:#fff;"></div>
<div style="position:absolute;left:1352px;top:728px;width:700px;height:38px;box-sizing:border-box;border:1px solid #a2a2a2;background:#fff;"></div>
<span class="t ls" style="left:1236.59px;top:529px;font-size:22.5px;letter-spacing:0.493px;">Salutation:</span>
<span class="t ls" style="left:1355.26px;top:529px;font-size:22.5px;letter-spacing:0.493px;">Janie Austin</span>
<span class="t ls" style="left:1255.80px;top:569px;font-size:22.5px;letter-spacing:0.180px;color:#737373;">Address:</span>
<span class="t ls" style="left:1358.38px;top:569px;font-size:22.5px;letter-spacing:0.560px;color:#737373;">234 Main St</span>
<span class="t ls" style="left:1298.17px;top:687px;font-size:22.5px;letter-spacing:0.691px;color:#737373;">City:</span>
<span class="t ls" style="left:1357.70px;top:689px;font-size:22.5px;letter-spacing:0.470px;color:#737373;">Big City</span>
<span class="t ls" style="left:1654.49px;top:689px;font-size:22.5px;letter-spacing:0.442px;color:#737373;">State:</span>
<span class="t ls" style="left:1725.00px;top:689px;font-size:22.5px;letter-spacing:-0.275px;color:#737373;">KY</span>
<span class="t ls" style="left:1819.12px;top:689px;font-size:22.5px;letter-spacing:0.308px;color:#737373;">Zip Code:</span>
<span class="t ls" style="left:1930.85px;top:689px;font-size:22.5px;letter-spacing:1.503px;color:#737373;">45689</span>
<span class="t ls" style="left:1256.47px;top:731px;font-size:22.5px;letter-spacing:0.630px;color:#737373;">Country:</span>
<span class="t ls" style="left:1357.81px;top:729px;font-size:22.5px;letter-spacing:-0.762px;color:#737373;">US</span>
<span class="t ls" style="left:1183.50px;top:771px;font-size:22.5px;letter-spacing:0.402px;">Phone Number:</span>
<div style="position:absolute;left:1784px;top:528px;width:28px;height:28px;box-sizing:border-box;border:1px solid #d4d4d4;border-radius:7px;background:#fff;box-shadow:inset 0 1px 2px rgba(0,0,0,.06);"></div>
<span class="t ls" style="left:1818.79px;top:523px;font-size:22.5px;letter-spacing:0.520px;color:#737373;">Override</span>
<div style="position:absolute;left:1928px;top:526px;width:128px;height:62px;background:#eeeeee;box-shadow:0 2px 0 #d0d0d0;"></div>
<div style="position:absolute;left:2052px;top:532px;width:2px;height:52px;background:#d8d8d8;"></div>
<span class="t ls" style="left:1956.19px;top:527px;font-size:22.5px;letter-spacing:0.537px;color:#737373;">Select</span>
<span class="t ls" style="left:1949.40px;top:553px;font-size:22.5px;letter-spacing:0.202px;color:#737373;">Address</span>
<div style="position:absolute;left:1928px;top:600px;width:128px;height:34px;background:#eeeeee;box-shadow:0 2px 0 #d0d0d0;"></div>
<div style="position:absolute;left:2052px;top:606px;width:2px;height:24px;background:#d8d8d8;"></div>
<span class="t ls" style="left:1937.80px;top:599px;font-size:22.5px;letter-spacing:0.441px;">MapQuest</span>
</section>
<section id="online-credentials">
<span class="t ls" style="left:1176.49px;top:831px;font-size:22.5px;letter-spacing:0.408px;color:#2b2b2b;">Online Credentials</span>
<div style="position:absolute;left:1162px;top:863px;width:918px;height:176px;background:#ebebeb;"></div>
<div style="position:absolute;left:1162px;top:864px;width:918px;height:174px;box-sizing:border-box;border:1px solid #a6a6a6;border-radius:11px;background:#fff;"></div>
<span class="t ls" style="left:1195.81px;top:889px;font-size:22.5px;letter-spacing:0.386px;">Username:</span>
<span class="t ls" style="left:1319.86px;top:889px;font-size:22.5px;letter-spacing:0.268px;">janie.austin</span>
<span class="t ls" style="left:1227.50px;top:933px;font-size:22.5px;letter-spacing:0.382px;">Role(s):</span>
<span class="t ls" style="left:1319.30px;top:933px;font-size:22.5px;letter-spacing:0.584px;">Administrator</span>
<span class="t ls" style="left:1193.60px;top:977px;font-size:22.5px;letter-spacing:0.530px;">Last Login:</span>
<span class="t ls" style="left:1319.30px;top:977px;font-size:22.5px;letter-spacing:0.646px;">Apr 9 2025 2:53 PM</span>
<span class="t ls" style="left:1728.47px;top:911px;font-size:22.5px;letter-spacing:0.238px;color:#0433ff;">Change</span>
<span class="t ls" style="left:1856.27px;top:911px;font-size:22.5px;letter-spacing:0.175px;color:#0433ff;">Clear</span>
<span class="t ls" style="left:1957.55px;top:911px;font-size:22.5px;letter-spacing:0.268px;color:#0433ff;">Transfer</span>
</section>
<footer id="status-bar">
<div style="position:absolute;left:222px;top:1186px;width:2170px;height:2px;background:#b3b3b3;"></div>
<div style="position:absolute;left:222px;top:1188px;width:2170px;height:54px;background:#fee7e4;"></div>
<div class="ic" style="left:246px;top:1198px"><svg width="32" height="32" viewBox="0 0 32 32"><circle cx="16" cy="16" r="16" fill="#c4171c"/><rect x="13.800" y="6.700" width="4.400" height="13.400" rx="2.200" fill="#fde6e3"/><circle cx="16" cy="23.100" r="2.300" fill="#fde6e3"/></svg></div>
<span class="t lsb" style="left:297.81px;top:1196px;font-size:23px;letter-spacing:0.276px;color:#4d0a0a;">Individuals that have online credentials cannot be deleted. Clear or transfer the credentials first.</span>
</footer>
</div>
</body></html>
